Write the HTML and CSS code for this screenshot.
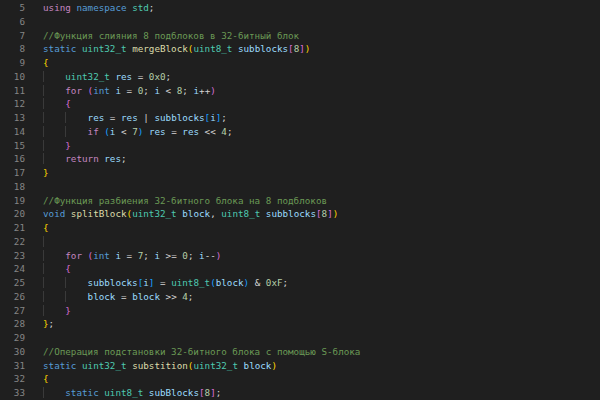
FILE: index.html
```html
<!DOCTYPE html>
<html>
<head>
<meta charset="utf-8">
<link rel="stylesheet" href="styles.css">
</head>
<body>
<div class="editor">
<div class="ln"><span class="no">5</span><span class="code"><span class="c">using</span> <span class="k">namespace</span> <span class="t">std</span>;</span></div>
<div class="ln"><span class="no">6</span><span class="code"></span></div>
<div class="ln"><span class="no">7</span><span class="code"><span class="m">//Функция слияния 8 подблоков в 32-битный блок</span></span></div>
<div class="ln"><span class="no">8</span><span class="code"><span class="k">static</span> <span class="t">uint32_t</span> <span class="f">mergeBlock</span><span class="b1">(</span><span class="t">uint8_t</span> <span class="v">subblocks</span><span class="b2">[</span><span class="n">8</span><span class="b2">]</span><span class="b1">)</span></span></div>
<div class="ln"><span class="no">9</span><span class="code"><span class="b1">{</span></span></div>
<div class="ln"><span class="no">10</span><span class="code"><span class="ind">    </span><span class="t">uint32_t</span> <span class="v">res</span> = <span class="n">0x0</span>;</span></div>
<div class="ln"><span class="no">11</span><span class="code"><span class="ind">    </span><span class="c">for</span> <span class="b2">(</span><span class="k">int</span> <span class="v">i</span> = <span class="n">0</span>; <span class="v">i</span> &lt; <span class="n">8</span>; <span class="v">i</span>++<span class="b2">)</span></span></div>
<div class="ln"><span class="no">12</span><span class="code"><span class="ind">    </span><span class="b2">{</span></span></div>
<div class="ln"><span class="no">13</span><span class="code"><span class="ind">    </span><span class="ind">    </span><span class="v">res</span> = <span class="v">res</span> | <span class="v">subblocks</span><span class="b3">[</span><span class="v">i</span><span class="b3">]</span>;</span></div>
<div class="ln"><span class="no">14</span><span class="code"><span class="ind">    </span><span class="ind">    </span><span class="c">if</span> <span class="b3">(</span><span class="v">i</span> &lt; <span class="n">7</span><span class="b3">)</span> <span class="v">res</span> = <span class="v">res</span> &lt;&lt; <span class="n">4</span>;</span></div>
<div class="ln"><span class="no">15</span><span class="code"><span class="ind">    </span><span class="b2">}</span></span></div>
<div class="ln"><span class="no">16</span><span class="code"><span class="ind">    </span><span class="c">return</span> <span class="v">res</span>;</span></div>
<div class="ln"><span class="no">17</span><span class="code"><span class="b1">}</span></span></div>
<div class="ln"><span class="no">18</span><span class="code"></span></div>
<div class="ln"><span class="no">19</span><span class="code"><span class="m">//Функция разбиения 32-битного блока на 8 подблоков</span></span></div>
<div class="ln"><span class="no">20</span><span class="code"><span class="k">void</span> <span class="f">splitBlock</span><span class="b1">(</span><span class="t">uint32_t</span> <span class="v">block</span>, <span class="t">uint8_t</span> <span class="v">subblocks</span><span class="b2">[</span><span class="n">8</span><span class="b2">]</span><span class="b1">)</span></span></div>
<div class="ln"><span class="no">21</span><span class="code"><span class="b1">{</span></span></div>
<div class="ln"><span class="no">22</span><span class="code"><span class="ind">    </span></span></div>
<div class="ln"><span class="no">23</span><span class="code"><span class="ind">    </span><span class="c">for</span> <span class="b2">(</span><span class="k">int</span> <span class="v">i</span> = <span class="n">7</span>; <span class="v">i</span> &gt;= <span class="n">0</span>; <span class="v">i</span>--<span class="b2">)</span></span></div>
<div class="ln"><span class="no">24</span><span class="code"><span class="ind">    </span><span class="b2">{</span></span></div>
<div class="ln"><span class="no">25</span><span class="code"><span class="ind">    </span><span class="ind">    </span><span class="v">subblocks</span><span class="b3">[</span><span class="v">i</span><span class="b3">]</span> = <span class="t">uint8_t</span><span class="b3">(</span><span class="v">block</span><span class="b3">)</span> &amp; <span class="n">0xF</span>;</span></div>
<div class="ln"><span class="no">26</span><span class="code"><span class="ind">    </span><span class="ind">    </span><span class="v">block</span> = <span class="v">block</span> &gt;&gt; <span class="n">4</span>;</span></div>
<div class="ln"><span class="no">27</span><span class="code"><span class="ind">    </span><span class="b2">}</span></span></div>
<div class="ln"><span class="no">28</span><span class="code"><span class="b1">}</span>;</span></div>
<div class="ln"><span class="no">29</span><span class="code"></span></div>
<div class="ln"><span class="no">30</span><span class="code"><span class="m">//Операция подстановки 32-битного блока с помощью S-блока</span></span></div>
<div class="ln"><span class="no">31</span><span class="code"><span class="k">static</span> <span class="t">uint32_t</span> <span class="f">substition</span><span class="b1">(</span><span class="t">uint32_t</span> <span class="v">block</span><span class="b1">)</span></span></div>
<div class="ln"><span class="no">32</span><span class="code"><span class="b1">{</span></span></div>
<div class="ln"><span class="no">33</span><span class="code"><span class="ind">    </span><span class="k">static</span> <span class="t">uint8_t</span> <span class="v">subBlocks</span><span class="b2">[</span><span class="n">8</span><span class="b2">]</span>;</span></div>
</div>
</body>
</html>
```
FILE: styles.css
```css
html, body {
  margin: 0;
  padding: 0;
  background: #1f1f1f;
}
.editor {
  width: 600px;
  height: 400px;
  overflow: hidden;
  background: #1f1f1f;
  padding-top: 1px;
  box-sizing: border-box;
  font-family: "DejaVu Sans Mono", "Liberation Mono", monospace;
  font-size: 9.25px;
  color: #d4d4d4;
}
.ln {
  display: flex;
  height: 13.75px;
  line-height: 13.75px;
  white-space: pre;
}
.no {
  width: 25px;
  text-align: right;
  color: #858585;
  flex: none;
}
.code {
  padding-left: 18px;
}
.ind {
  box-shadow: inset 1px 0 #3a3a3a;
}
.k { color: #569cd6; }
.c { color: #c586c0; }
.t { color: #4ec9b0; }
.f { color: #dcdcaa; }
.v { color: #9cdcfe; }
.n { color: #b5cea8; }
.m { color: #6a9955; }
.b1 { color: #ffd700; }
.b2 { color: #da70d6; }
.b3 { color: #179fff; }
```
